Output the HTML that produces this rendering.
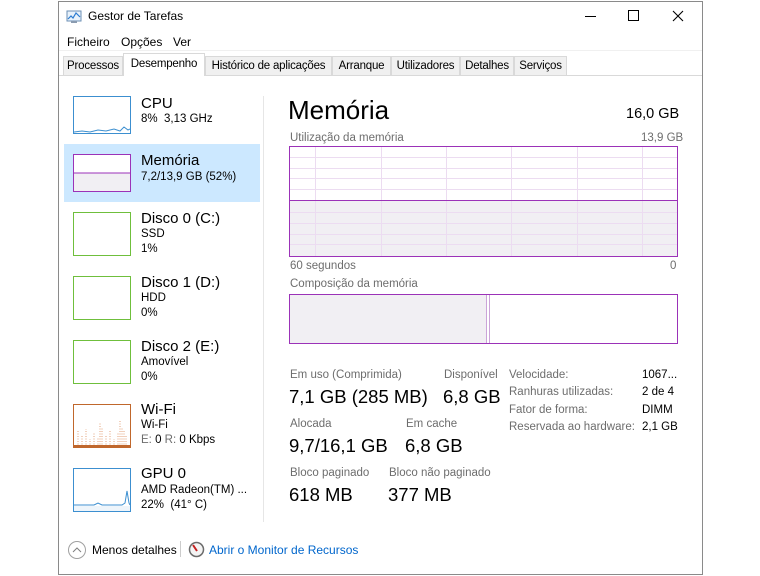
<!DOCTYPE html>
<html><head><meta charset="utf-8"><style>
*{margin:0;padding:0;box-sizing:border-box}
body{width:760px;height:576px;background:#fff;position:relative;overflow:hidden;font-family:"Liberation Sans",sans-serif;color:#000}
.a{position:absolute;white-space:nowrap}
.win{position:absolute;left:58px;top:1px;width:645px;height:574px;border:1px solid #8a8a8a;background:#fff}
.tab{position:absolute;top:56px;height:19px;font-size:11.5px;letter-spacing:-0.2px;padding:3px 0 0;text-align:center;white-space:nowrap;overflow:hidden;border:1px solid #d9d9d9;border-bottom:none;background:#f0f0f0;color:#000}
.th{position:absolute;left:73px;width:58px;background:#fff}
.t1{font-size:15px}
.t2{font-size:11.5px}
.lbl{font-size:11.5px;color:#6d6d6d}
.val{font-size:18.5px}
.r{font-size:11.5px;color:#6d6d6d}
.rv{font-size:11.5px;color:#000}
</style></head><body>
<div class="win"></div>
<svg class="a" style="left:66px;top:10px" width="16" height="14"><rect x="1" y="1" width="14" height="10" fill="#e8f2fb" stroke="#6b8fb5"/><polyline points="2,9 5,6 7,8 10,3 14,7" fill="none" stroke="#2a7bd1" stroke-width="1.2"/><rect x="5" y="11" width="6" height="2" fill="#8a9bb0"/></svg>
<div class="a" style="left:88px;top:9px;font-size:12px">Gestor de Tarefas</div>
<div class="a" style="left:585px;top:16px;width:11px;height:1px;background:#000"></div>
<div class="a" style="left:628px;top:10px;width:11px;height:11px;border:1px solid #000"></div>
<svg class="a" style="left:672px;top:10px" width="12" height="12"><path d="M1 1L11 11M11 1L1 11" stroke="#000" stroke-width="1.1"/></svg>
<div class="a" style="left:67px;top:35px;font-size:12px">Ficheiro</div>
<div class="a" style="left:121px;top:35px;font-size:12px">Opções</div>
<div class="a" style="left:173px;top:35px;font-size:12px">Ver</div>
<div class="a" style="left:59px;top:50px;width:643px;height:1px;background:#f0f0f0"></div>
<div class="tab" style="left:63px;width:60px">Processos</div>
<div class="tab" style="left:205px;width:127px">Histórico de aplicações</div>
<div class="tab" style="left:332px;width:59px">Arranque</div>
<div class="tab" style="left:391px;width:69px">Utilizadores</div>
<div class="tab" style="left:460px;width:54px">Detalhes</div>
<div class="tab" style="left:514px;width:53px">Serviços</div>
<div class="a" style="left:59px;top:75px;width:643px;height:1px;background:#d9d9d9"></div>
<div class="tab" style="left:123px;top:53px;height:23px;width:82px;background:#fff;padding-top:4px">Desempenho</div>
<div class="a" style="left:64px;top:144px;width:196px;height:58px;background:#cce8ff"></div>
<div class="a" style="left:263px;top:96px;width:1px;height:426px;background:#e6e6e6"></div>

<div class="th" style="top:96px;height:38px;border:1px solid #3c8fd0"></div>
<svg class="a" style="left:74px;top:120px" width="56" height="13"><polyline points="0,12 8,11 16,12 24,10 32,11 40,9 46,11 50,7 54,10 56,9" fill="none" stroke="#3c8fd0" stroke-width="1"/></svg>
<div class="a t1" style="left:141px;top:95px">CPU</div>
<div class="a t2" style="left:141px;top:113px">8%&nbsp; 3,13 GHz</div>

<div class="th" style="top:154px;height:38px;border:1px solid #9b32b8;background:linear-gradient(#fff 0 48%,#9b32b8 48% 52%,#f1eff3 52%)"></div>
<div class="a t1" style="left:141px;top:152px">Memória</div>
<div class="a t2" style="left:141px;top:171px">7,2/13,9 GB (52%)</div>

<div class="th" style="top:212px;height:44px;border:1px solid #6fbf3c"></div>
<div class="a t1" style="left:141px;top:210px">Disco 0 (C:)</div>
<div class="a t2" style="left:141px;top:228px">SSD</div>
<div class="a t2" style="left:141px;top:243px">1%</div>

<div class="th" style="top:276px;height:44px;border:1px solid #6fbf3c"></div>
<div class="a t1" style="left:141px;top:274px">Disco 1 (D:)</div>
<div class="a t2" style="left:141px;top:292px">HDD</div>
<div class="a t2" style="left:141px;top:307px">0%</div>

<div class="th" style="top:340px;height:44px;border:1px solid #6fbf3c"></div>
<div class="a t1" style="left:141px;top:338px">Disco 2 (E:)</div>
<div class="a t2" style="left:141px;top:356px">Amovível</div>
<div class="a t2" style="left:141px;top:371px">0%</div>

<div class="th" style="top:404px;height:44px;border:1px solid #c0672c"></div>
<svg class="a" style="left:74px;top:405px" width="56" height="42"><g stroke="#e3a27a" stroke-width="1" stroke-dasharray="1 1.5"><path d="M4 42V26M8 42V30M12 42V24M16 42V34M20 42V28M24 42V32M28 42V22M32 42V30M36 42V26M40 42V34M44 42V28M48 42V22M52 42V30"/><path d="M26 42V18M46 42V16M50 42V26"/></g><path d="M0 41H56" stroke="#c0672c" stroke-width="2"/></svg>
<div class="a t1" style="left:141px;top:401px">Wi-Fi</div>
<div class="a t2" style="left:141px;top:419px">Wi-Fi</div>
<div class="a t2" style="left:141px;top:434px"><span style="color:#6d6d6d">E:</span> 0 <span style="color:#6d6d6d">R:</span> 0 Kbps</div>

<div class="th" style="top:468px;height:44px;border:1px solid #3c8fd0"></div>
<svg class="a" style="left:74px;top:469px" width="56" height="42"><polyline points="0,36 20,36 24,34 28,36 48,36 51,34 53,22 55,34 56,36" fill="none" stroke="#3c8fd0" stroke-width="1"/><rect x="0" y="37" width="56" height="5" fill="#eef5fb"/></svg>
<div class="a t1" style="left:141px;top:465px">GPU 0</div>
<div class="a t2" style="left:141px;top:484px">AMD Radeon(TM) ...</div>
<div class="a t2" style="left:141px;top:499px">22%&nbsp; (41° C)</div>

<div class="a" style="left:288px;top:95px;font-size:26px">Memória</div>
<div class="a" style="left:626px;top:106px;font-size:14.5px">16,0 GB</div>
<div class="a lbl" style="left:290px;top:132px">Utilização da memória</div>
<div class="a lbl" style="left:641px;top:132px">13,9 GB</div>
<svg class="a" style="left:289px;top:146px" width="389" height="111">
<rect x="1" y="55" width="387" height="55" fill="#f1eff3"/>
<g stroke="#ecdcf1" stroke-width="1">
<path d="M26.5 1V110M92.5 1V110M157.5 1V110M222.5 1V110M288.5 1V110M353.5 1V110"/>
<path d="M1 11.5H388M1 22.5H388M1 32.5H388M1 43.5H388M1 66.5H388M1 77.5H388M1 88.5H388M1 98.5H388"/>
</g>
<path d="M1 54.5H388" stroke="#9b32b8" stroke-width="1"/>
<rect x="0.5" y="0.5" width="388" height="110" fill="none" stroke="#9b32b8"/>
</svg>
<div class="a lbl" style="left:290px;top:260px">60 segundos</div>
<div class="a lbl" style="left:670px;top:260px">0</div>
<div class="a lbl" style="left:290px;top:278px">Composição da memória</div>
<svg class="a" style="left:289px;top:294px" width="389" height="50">
<rect x="1" y="1" width="197" height="48" fill="#f1eff3"/>
<path d="M197.5 1V49M200.5 1V49" stroke="#cba4d8"/>
<rect x="0.5" y="0.5" width="388" height="49" fill="none" stroke="#9b32b8"/>
</svg>

<div class="a lbl" style="left:290px;top:369px">Em uso (Comprimida)</div>
<div class="a val" style="left:289px;top:386px">7,1 GB (285 MB)</div>
<div class="a lbl" style="left:444px;top:369px">Disponível</div>
<div class="a val" style="left:443px;top:386px">6,8 GB</div>
<div class="a lbl" style="left:290px;top:418px">Alocada</div>
<div class="a val" style="left:289px;top:435px">9,7/16,1 GB</div>
<div class="a lbl" style="left:406px;top:418px">Em cache</div>
<div class="a val" style="left:405px;top:435px">6,8 GB</div>
<div class="a lbl" style="left:290px;top:467px">Bloco paginado</div>
<div class="a val" style="left:289px;top:484px">618 MB</div>
<div class="a lbl" style="left:389px;top:467px">Bloco não paginado</div>
<div class="a val" style="left:388px;top:484px">377 MB</div>

<div class="a r" style="left:509px;top:369px">Velocidade:</div>
<div class="a rv" style="left:642px;top:369px">1067...</div>
<div class="a r" style="left:509px;top:386px">Ranhuras utilizadas:</div>
<div class="a rv" style="left:642px;top:386px">2 de 4</div>
<div class="a r" style="left:509px;top:404px">Fator de forma:</div>
<div class="a rv" style="left:642px;top:404px">DIMM</div>
<div class="a r" style="left:509px;top:421px">Reservada ao hardware:</div>
<div class="a rv" style="left:642px;top:421px">2,1 GB</div>

<svg class="a" style="left:67px;top:540px" width="20" height="20"><circle cx="10" cy="10" r="8.5" fill="none" stroke="#a0a0a0"/><path d="M6 12L10 8L14 12" fill="none" stroke="#808080"/></svg>
<div class="a" style="left:92px;top:543px;font-size:12px">Menos detalhes</div>
<div class="a" style="left:180px;top:541px;width:1px;height:16px;background:#ccc"></div>
<svg class="a" style="left:188px;top:541px" width="17" height="17"><circle cx="8.5" cy="8.5" r="7" fill="#f4f4f4" stroke="#6b6b6b" stroke-width="1.5"/><path d="M5 4L9 10" stroke="#c42020" stroke-width="2"/></svg>
<div class="a" style="left:209px;top:543px;font-size:12px;color:#0066cc">Abrir o Monitor de Recursos</div>
</body></html>
